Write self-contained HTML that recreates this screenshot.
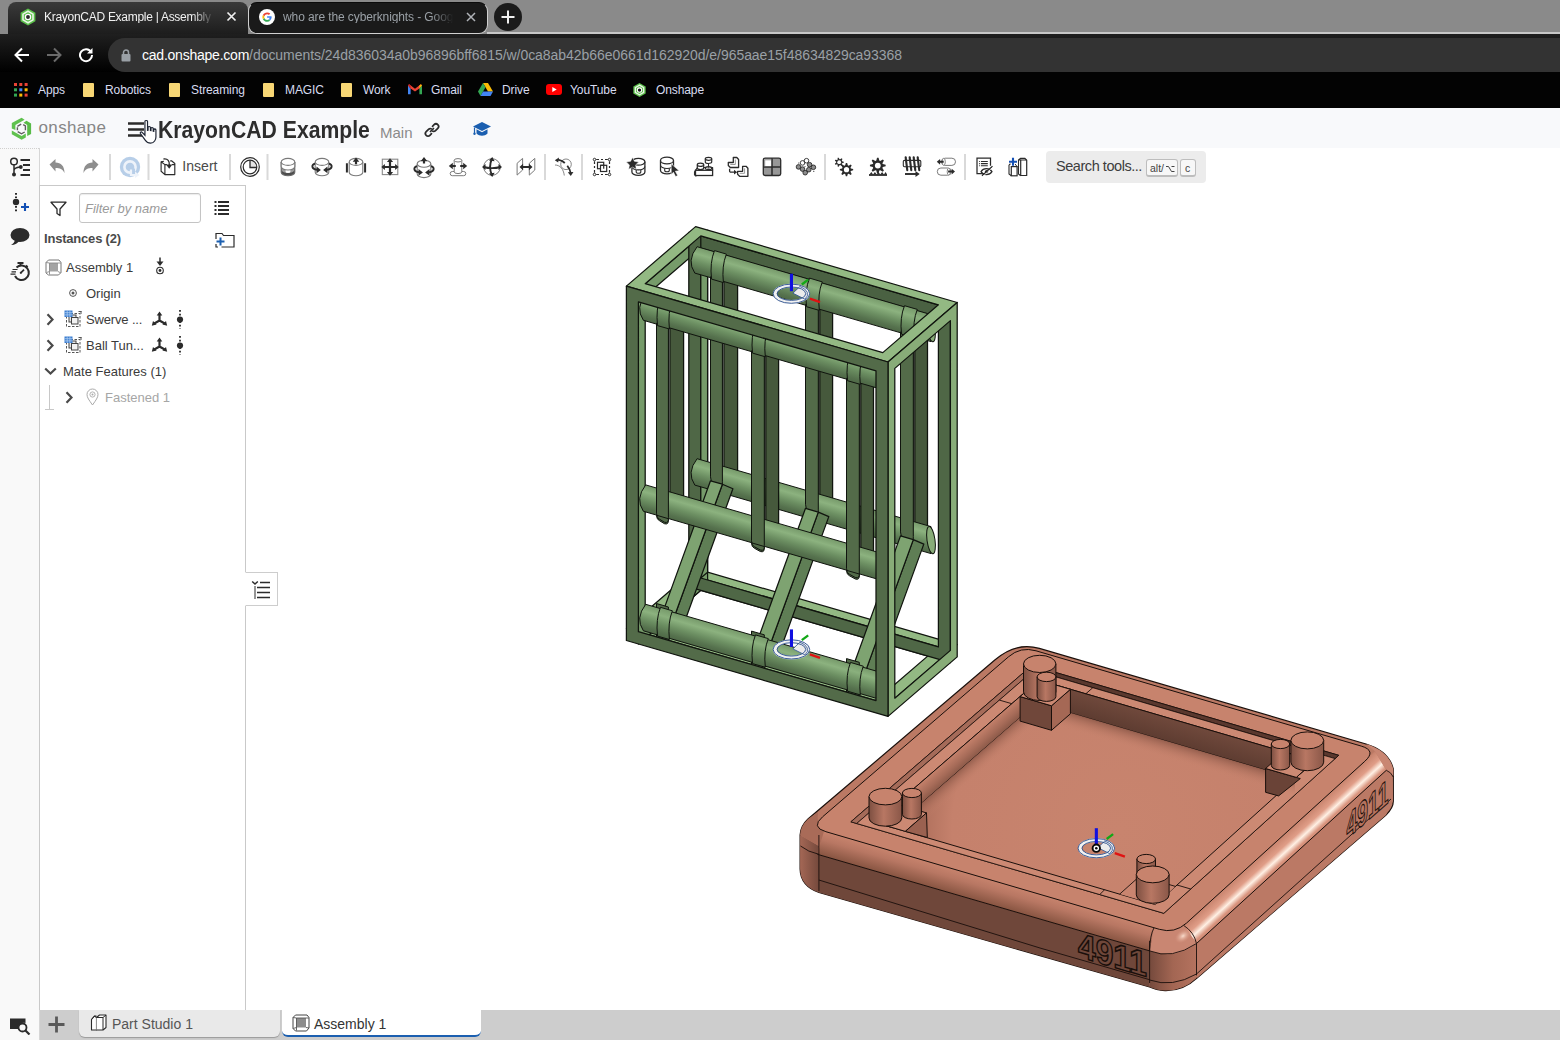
<!DOCTYPE html>
<html>
<head>
<meta charset="utf-8">
<title>KrayonCAD Example | Assembly 1</title>
<style>
*{box-sizing:border-box;margin:0;padding:0}
html,body{width:1560px;height:1040px;overflow:hidden;background:#fff}
body{font-family:"Liberation Sans",sans-serif;position:relative;color:#333}
.abs{position:absolute}
.t{position:absolute;white-space:nowrap;line-height:1}
/* browser chrome */
#tabstrip{left:0;top:0;width:1560px;height:34px;background:#8a8a8a}
#tabline{left:487px;top:32px;width:1073px;height:2px;background:#c8c8c8}
#tab1{left:8px;top:2px;width:240px;height:33px;border-radius:8px 8px 0 0;background:linear-gradient(#3a3a3a,#1c1c1c)}
#tab2{left:248px;top:2px;width:240px;height:32px;border-radius:9px;background:#1a1a1a;border:1px solid #d0d0d0;border-top-color:#0b0b0b}
#navbar{left:0;top:34px;width:1560px;height:38px;background:linear-gradient(#1f1f1f,#000)}
#url{left:108px;top:38px;width:1460px;height:34px;border-radius:17px 0 0 17px;background:#333}
#bm{left:0;top:72px;width:1560px;height:36px;background:#030303}
.bmt{font-size:12px;letter-spacing:-0.1px;color:#d8dcf0;top:84px}
.fold{position:absolute;top:83px;width:11px;height:14px;background:#f8d775;border-radius:1px}
/* onshape */
#hdr{left:0;top:108px;width:1560px;height:40px;background:#f8f9fb}
#tb{left:40px;top:148px;width:1520px;height:38px;background:#fff}
#strip{left:0;top:148px;width:40px;height:892px;background:#f9f9f9;border-right:1px solid #d6d6d6}
#striptop{left:0;top:148px;width:39px;height:1px;border-top:1px dotted #d0d0d0}
#panel{left:39px;top:185px;width:207px;height:825px;background:#fff;border:1px solid #c9c9c9;border-bottom:none}
#bot{left:40px;top:1010px;width:1520px;height:30px;background:#cdcdcd}
.sep{position:absolute;top:154px;width:2px;height:25px;background:#d6d6d6}
.pt{font-size:13px;color:#3b3b3b}
</style>
</head>
<body>
<!-- ===== browser chrome ===== -->
<div id="tabstrip" class="abs"></div>
<div id="tabline" class="abs"></div>
<div id="tab2" class="abs"></div>
<div id="tab1" class="abs"></div>
<div id="navbar" class="abs"></div>
<div id="url" class="abs"></div>
<div id="bm" class="abs"></div>

<!-- tab 1 -->
<svg class="abs" style="left:19px;top:8px" width="18" height="18" viewBox="0 0 18 18"><polygon points="9,0.5 16.4,4.7 16.4,13.3 9,17.5 1.6,13.3 1.6,4.7" fill="#5bbf4a"/><polygon points="9,3.2 14,6.1 14,11.9 9,14.8 4,11.9 4,6.1" fill="none" stroke="#e9f5e6" stroke-width="1.6"/><circle cx="9" cy="9" r="2.6" fill="#2a2a2a" stroke="#fff" stroke-width="1.3"/></svg>
<div class="t" style="left:44px;top:11px;font-size:12px;color:#f1f1f1;width:172px;overflow:hidden;letter-spacing:-0.28px;-webkit-mask-image:linear-gradient(90deg,#000 86%,transparent 99%)">KrayonCAD Example | Assembly 1</div>
<svg class="abs" style="left:226px;top:11px" width="11" height="11" viewBox="0 0 11 11"><path d="M1.5 1.5L9.5 9.5M9.5 1.5L1.5 9.5" stroke="#f0f0f0" stroke-width="1.7"/></svg>
<!-- tab 2 -->
<svg class="abs" style="left:259px;top:9px" width="16" height="16" viewBox="0 0 16 16"><circle cx="8" cy="8" r="8" fill="#fff"/><path d="M12.6 8.1c0-.35-.03-.6-.09-.87H8.1v1.6h2.6c-.05.4-.34 1-.97 1.42l1.5 1.15c.9-.83 1.4-2.04 1.4-3.3z" fill="#4285f4"/><path d="M8.1 12.8c1.27 0 2.34-.42 3.12-1.14l-1.5-1.15c-.4.28-.93.47-1.62.47-1.24 0-2.3-.82-2.67-1.95l-1.53 1.18C4.66 11.73 6.25 12.8 8.1 12.8z" fill="#34a853"/><path d="M5.43 9.03A2.9 2.9 0 015.27 8.1c0-.32.06-.64.15-.93L3.87 5.97A4.7 4.7 0 003.4 8.1c0 .76.18 1.48.5 2.11l1.53-1.18z" fill="#fbbc05"/><path d="M8.1 5.22c.88 0 1.48.38 1.82.7l1.33-1.3C10.43 3.86 9.37 3.4 8.1 3.4c-1.85 0-3.44 1.06-4.22 2.6l1.54 1.2c.38-1.14 1.44-1.97 2.68-1.97z" fill="#ea4335"/></svg>
<div class="t" style="left:283px;top:11px;font-size:12px;color:#9aa0a6;width:172px;overflow:hidden;letter-spacing:-0.1px;-webkit-mask-image:linear-gradient(90deg,#000 86%,transparent 99%)">who are the cyberknights - Google Search</div>
<svg class="abs" style="left:466px;top:12px" width="10" height="10" viewBox="0 0 10 10"><path d="M1 1L9 9M9 1L1 9" stroke="#b0b3b8" stroke-width="1.5"/></svg>
<!-- new tab -->
<div class="abs" style="left:494px;top:3px;width:28px;height:28px;border-radius:14px;background:#1b1b1b"></div>
<svg class="abs" style="left:501px;top:10px" width="14" height="14" viewBox="0 0 14 14"><path d="M7 0.5V13.5M0.5 7H13.5" stroke="#f0f0f0" stroke-width="2"/></svg>
<!-- nav -->
<svg class="abs" style="left:14px;top:47px" width="16" height="16" viewBox="0 0 16 16"><path d="M15 8H2M8 1.5L1.5 8L8 14.5" fill="none" stroke="#fff" stroke-width="2"/></svg>
<svg class="abs" style="left:46px;top:47px" width="16" height="16" viewBox="0 0 16 16"><path d="M1 8H14M8 1.5L14.5 8L8 14.5" fill="none" stroke="#6b6b6b" stroke-width="2"/></svg>
<svg class="abs" style="left:78px;top:47px" width="16" height="16" viewBox="0 0 16 16"><path d="M13.2 5.2A6 6 0 1 0 14 8" fill="none" stroke="#fff" stroke-width="2"/><path d="M14.5 1v5.5H9z" fill="#fff"/></svg>
<svg class="abs" style="left:121px;top:49px" width="10" height="13" viewBox="0 0 10 13"><rect x="0.5" y="5" width="9" height="7.5" rx="1" fill="#9aa0a6"/><path d="M2.5 5.5V3.5a2.5 2.5 0 015 0v2" fill="none" stroke="#9aa0a6" stroke-width="1.5"/></svg>
<div class="t" id="urlt" style="left:142px;top:48px;font-size:14px;color:#fff;letter-spacing:0px"><span id="dom" style="letter-spacing:-0.23px">cad.onshape.com</span><span style="color:#9aa0a6;letter-spacing:-0.043px" id="pth">/documents/24d836034a0b96896bff6815/w/0ca8ab42b66e0661d162920d/e/965aae15f48634829ca93368</span></div>
<!-- bookmarks -->
<svg class="abs" style="left:14px;top:83px" width="14" height="14" viewBox="0 0 14 14"><g><rect x="0" y="0" width="3" height="3" fill="#ea4335"/><rect x="5.3" y="0" width="3" height="3" fill="#ea4335"/><rect x="10.6" y="0" width="3" height="3" fill="#ea4335"/><rect x="0" y="5.3" width="3" height="3" fill="#34a853"/><rect x="5.3" y="5.3" width="3" height="3" fill="#4285f4"/><rect x="10.6" y="5.3" width="3" height="3" fill="#fbbc05"/><rect x="0" y="10.6" width="3" height="3" fill="#34a853"/><rect x="5.3" y="10.6" width="3" height="3" fill="#fbbc05"/><rect x="10.6" y="10.6" width="3" height="3" fill="#ea4335"/></g></svg>
<div class="t bmt" style="left:38px">Apps</div>
<div class="fold" style="left:83px"></div><div class="t bmt" style="left:105px">Robotics</div>
<div class="fold" style="left:169px"></div><div class="t bmt" style="left:191px">Streaming</div>
<div class="fold" style="left:263px"></div><div class="t bmt" style="left:285px">MAGIC</div>
<div class="fold" style="left:341px"></div><div class="t bmt" style="left:363px">Work</div>
<svg class="abs" style="left:408px;top:84px" width="14" height="11" viewBox="0 0 14 11"><path d="M0 1.2V10.2H2.6V4.4L0 1.2z" fill="#4285f4"/><path d="M14 1.2V10.2H11.4V4.4L14 1.2z" fill="#34a853"/><path d="M0 1.2L2.6 4.4 7 7.6 11.4 4.4 14 1.2 12.8 0.3 7 4.7 1.2 0.3z" fill="#ea4335"/><path d="M0 1.2L2.6 4.4V1.6L1.2 0.3z" fill="#c5221f"/><path d="M14 1.2L11.4 4.4V1.6L12.8 0.3z" fill="#fbbc05"/></svg>
<div class="t bmt" style="left:431px">Gmail</div>
<svg class="abs" style="left:478px;top:83px" width="15" height="13" viewBox="0 0 15 13"><path d="M5 0H10L15 8.6H10z" fill="#fbbc05"/><path d="M5 0L0 8.6 2.5 13 7.5 4.3z" fill="#34a853"/><path d="M5 8.6L2.5 13H12.5L15 8.6z" fill="#4285f4"/></svg>
<div class="t bmt" style="left:502px">Drive</div>
<svg class="abs" style="left:546px;top:84px" width="16" height="11" viewBox="0 0 16 11"><rect width="16" height="11" rx="3" fill="#ff0000"/><path d="M6.3 3L10.7 5.5 6.3 8z" fill="#fff"/></svg>
<div class="t bmt" style="left:570px">YouTube</div>
<svg class="abs" style="left:632px;top:82px" width="15" height="16" viewBox="0 0 18 18"><polygon points="9,0.5 16.4,4.7 16.4,13.3 9,17.5 1.6,13.3 1.6,4.7" fill="#5bbf4a"/><polygon points="9,3.2 14,6.1 14,11.9 9,14.8 4,11.9 4,6.1" fill="none" stroke="#e9f5e6" stroke-width="1.6"/><circle cx="9" cy="9" r="2.6" fill="#111" stroke="#fff" stroke-width="1.3"/></svg>
<div class="t bmt" style="left:656px">Onshape</div>
<!--CHROME-->
<!-- ===== onshape ===== -->
<div id="hdr" class="abs"></div>
<div id="tb" class="abs"></div>
<div id="strip" class="abs"></div>
<div id="striptop" class="abs"></div>
<div id="panel" class="abs"></div>
<div id="bot" class="abs"></div>

<!-- header -->
<svg class="abs" style="left:0px;top:108px" width="40" height="40" viewBox="0 108 40 40">
<polygon points="11.800,123 21.600,117.700 24.600,119.700 15.400,125 15.400,129.900 11.800,128.500" fill="#5fc14e"/>
<polygon points="23.500,122.700 26.500,120.800 31.100,123.400 31.100,134 27.200,136.100 27.200,125" fill="#58bb47"/>
<polygon points="11.800,130.500 21.600,136 25.800,133.600 25.800,137.400 21.600,139.800 11.800,134.300" fill="#5fc14e"/>
<path d="M17.400 126.300l3.800-2.100M23.200 124.700l2.200 1.300v4.300M24.700 132l-3.200 1.800-3.800-2.200M17.400 130.300v-3" fill="none" stroke="#5e5e5e" stroke-width="1.400"/>
</svg>
<div class="t" id="ons" style="left:38.500px;top:119.200px;font-size:17px;color:#868686;letter-spacing:0.36px;font-weight:400">onshape</div>
<svg class="abs" style="left:128px;top:121px" width="17" height="17" viewBox="0 0 17 17"><path d="M0 2.500H16M0 8.500H16M0 14.500H16" stroke="#2b2b2b" stroke-width="2.600"/></svg>
<svg class="abs" style="left:139px;top:119px" width="20.500" height="28" viewBox="0 0 19 26"><path d="M5.500 2.200c0-1.100 2.400-1.100 2.400 0v8.300l.5-.1v-2.700c0-1 2.200-1 2.200.1v2.900l.5.100v-2.200c0-1 2.100-.9 2.100.1v2.600l.5.100v-1.500c0-1 2-.8 2 .2v6.500c0 1.600-.5 2.800-1.200 3.800-.8 1.200-1.800 2-3.800 2-2.600 0-3.700-1-4.800-2.600L1.300 13.500c-.6-1 .6-2 1.600-1.100l2.600 2.700z" fill="#fff" stroke="#1d2433" stroke-width="1.100"/></svg>
<div class="t" id="ttl" style="left:158px;top:119px;font-size:23px;font-weight:700;color:#2d2d2d;transform:scaleX(0.921);transform-origin:0 0">KrayonCAD Example</div>
<div class="t" id="main" style="left:380px;top:125px;font-size:15px;color:#8a8a8a">Main</div>
<svg class="abs" style="left:423px;top:121px" width="18" height="18" viewBox="0 0 18 18"><g fill="none" stroke="#2b2b2b" stroke-width="1.700" stroke-linecap="round"><path d="M7.500 10.500l3-3"/><path d="M9.500 5.300l1.600-1.600a2.600 2.600 0 013.700 3.700l-2.300 2.300a2.600 2.600 0 01-2.700.6"/><path d="M8.500 12.700l-1.600 1.600a2.600 2.600 0 01-3.700-3.700l2.300-2.300a2.600 2.600 0 012.700-.6"/></g></svg>
<svg class="abs" style="left:472px;top:121px" width="20" height="17" viewBox="0 0 20 17"><path d="M10 1L1 5.500 10 10l9-4.500z" fill="#1b5fb0"/><path d="M4.500 8.300v4.200c1.500 1.600 3.500 2.200 5.500 2.200s4-.6 5.500-2.200V8.300L10 11.200z" fill="#1b5fb0"/><path d="M2.500 6.500V12" stroke="#1b5fb0" stroke-width="1.200"/><circle cx="2.500" cy="12.800" r="1.200" fill="#1b5fb0"/></svg>
<!--HEADER-->
<svg class="abs" style="left:40px;top:147.800px" width="1520" height="38" viewBox="0 0 1520 38">
<rect x="69" y="6" width="2" height="26" fill="#d9d9d9"/>
<rect x="107.5" y="6" width="2" height="26" fill="#d9d9d9"/>
<rect x="189" y="6" width="2" height="26" fill="#d9d9d9"/>
<rect x="226.5" y="6" width="2" height="26" fill="#d9d9d9"/>
<rect x="504" y="6" width="2" height="26" fill="#d9d9d9"/>
<rect x="541" y="6" width="2" height="26" fill="#d9d9d9"/>
<rect x="784" y="6" width="2" height="26" fill="#d9d9d9"/>
<rect x="924" y="6" width="2" height="26" fill="#d9d9d9"/>
<g transform="translate(17,19)"><path d="M-7.500 -2.500L-1.500 -8v3.500c5.500 0 9 3.500 9 10.500-1.800-3.800-4.500-5-9-5V4.500z" fill="#8e8e8e"/></g>
<g transform="translate(51,19)"><g transform="scale(-1,1)"><path d="M-7.500 -2.500L-1.500 -8v3.500c5.500 0 9 3.500 9 10.500-1.800-3.800-4.500-5-9-5V4.500z" fill="#8e8e8e"/></g></g>
<g transform="translate(90,19)"><circle r="10.200" fill="#b7cee8"/><circle r="5.600" fill="none" stroke="#eef3fa" stroke-width="2.600"/><path d="M0.500 1.500h4.500v7.500h-4.500z" fill="#b7cee8"/><path d="M1 2.500v5.500h5.500" fill="none" stroke="#eef3fa" stroke-width="2.200"/><path d="M5 4.500l4.500 3.500-4.500 3z" fill="#eef3fa"/></g>
<g transform="translate(128,19)"><path d="M-6.900 -5.200L-3.100 -2.400V7.600L-6.900 4.200z" fill="#fff" stroke="#2b2b2b" stroke-width="1.150" stroke-linejoin="round"/><path d="M-3.100 -2.400h2M4 -2.400h2.800V7.600H-3.100" fill="none" stroke="#2b2b2b" stroke-width="1.150" stroke-linejoin="round"/><path d="M-6.900 -5.200l2.800-.6M2.200 -6.200h1.300l3.300 2.700v1.100" fill="none" stroke="#2b2b2b" stroke-width="1.150" stroke-linejoin="round"/><path d="M-4.500 -8C0 -8.700 1.600 -5.500 1.300 -2" fill="none" stroke="#2b2b2b" stroke-width="1.300"/><path d="M-2 -2.600h6.400l-3.200 4.400z" fill="#2b2b2b"/></g>
<text x="142.300" y="23.300" font-family="Liberation Sans, sans-serif" font-size="15.200" fill="#4a4a4a" textLength="35.200" lengthAdjust="spacingAndGlyphs">Insert</text>
<g transform="translate(210,19)"><circle r="9.300" fill="#fff" stroke="#2b2b2b" stroke-width="1.200"/><path d="M0 -6.800A6.800 6.800 0 0 1 6.800 0H0z" fill="#e4e4e4"/><circle r="6.800" fill="none" stroke="#2b2b2b" stroke-width="1.200"/><path d="M0 -6.800V0.500H6.800" fill="none" stroke="#2b2b2b" stroke-width="1.300"/></g>
<g transform="translate(248,19)"><path d="M-6.800 -0.500v5.800a6.800 3.500 0 0013.600 0v-5.800a6.800 3.500 0 01-13.600 0z" fill="#4d4d4d"/><path d="M-6.800 -0.500a6.800 3.500 0 0013.600 0v3a6.800 3.500 0 01-13.600 0z" fill="#9c9c9c"/><path d="M-2.400 2.500v2a2.400 1.600 0 004.800 0v-2z" fill="#fff"/><path d="M-6.800 -5.100v10.400a6.800 3.500 0 0013.600 0v-10.400" fill="none" stroke="#6a6a6a" stroke-width="1.100"/><path d="M-6.800 -5.100v4.600a6.800 3.500 0 0013.600 0v-4.600" fill="#fff" stroke="#7a7a7a" stroke-width="1.100"/><ellipse cx="0" cy="-5.100" rx="6.800" ry="3.500" fill="#fff" stroke="#7a7a7a" stroke-width="1.100"/></g>
<g transform="translate(282,19)"><path d="M-6.800 -5.100v10.400a6.800 3.500 0 0013.600 0v-10.400" fill="#fff" stroke="#7a7a7a" stroke-width="1.100"/><ellipse cx="0" cy="-5.100" rx="6.800" ry="3.500" fill="#fff" stroke="#7a7a7a" stroke-width="1.100"/><path d="M-7 -3.200C-10.800 -2.500 -10.800 2 -5 2.800M7 -3.200C10.800 -2.500 10.800 2 5 2.800" fill="none" stroke="#2b2b2b" stroke-width="1.900"/><path d="M-5.500 -0.400L-1.100 2.900-5.500 6.200zM5.500 -0.400L1.100 2.900 5.500 6.200z" fill="#2b2b2b"/></g>
<g transform="translate(316,19)"><path d="M-6.800 -5.100v10.400a6.800 3.500 0 0013.600 0v-10.400" fill="#fff" stroke="#7a7a7a" stroke-width="1.100"/><ellipse cx="0" cy="-5.100" rx="6.800" ry="3.500" fill="#fff" stroke="#7a7a7a" stroke-width="1.100"/><path d="M-9.100 -3.800v9.400M9.100 -3.800v9.400" stroke="#2b2b2b" stroke-width="2"/><path d="M0 -9.400l3.300 4.200h-2.200v2.400h-2.200v-2.400h-2.200z" fill="#2b2b2b"/></g>
<g transform="translate(350,19)"><rect x="-7.700" y="-7.800" width="15.500" height="15.400" fill="#fdfdfd" stroke="#8a8a8a" stroke-width="1.100"/><path d="M0 -8.700l3.100 3.600h-2v4h4v-2l3.600 3.100-3.600 3.100v-2h-4v4h2l-3.100 3.600-3.100-3.600h2v-4h-4v2l-3.600-3.100 3.600-3.100v2h4v-4h-2z" fill="#2b2b2b"/></g>
<g transform="translate(384,19)"><g transform="translate(0,1.800)"><path d="M-6.800 -5.100v10.400a6.800 3.500 0 0013.600 0v-10.400" fill="#fff" stroke="#7a7a7a" stroke-width="1.100"/><ellipse cx="0" cy="-5.100" rx="6.800" ry="3.500" fill="#fff" stroke="#7a7a7a" stroke-width="1.100"/></g><path d="M0 -10l3.300 4.200h-2.200v2.400h-2.200v-2.400h-2.200z" fill="#2b2b2b"/><g transform="translate(0,2.500)"><path d="M-7 -3.200C-10.800 -2.500 -10.800 2 -5 2.800M7 -3.200C10.800 -2.500 10.800 2 5 2.800" fill="none" stroke="#2b2b2b" stroke-width="1.900"/><path d="M-5.500 -0.400L-1.100 2.900-5.500 6.200zM5.500 -0.400L1.100 2.900 5.500 6.200z" fill="#2b2b2b"/></g></g>
<g transform="translate(418,19)"><rect x="-7.800" y="4.500" width="15.600" height="4.200" rx="2.100" fill="#fff" stroke="#7a7a7a" stroke-width="1"/><path d="M-3.800 -6.700v11.500a3.800 1.800 0 007.600 0v-11.500" fill="#fff" stroke="#7a7a7a" stroke-width="1"/><ellipse cx="0" cy="-6.700" rx="3.800" ry="1.700" fill="#fff" stroke="#7a7a7a" stroke-width="1"/><path d="M-9.200 -1l4-3.300v2.200h3v2.200h-3v2.200zM9.200 -1l-4-3.300v2.200h-3v2.200h3v2.200z" fill="#2b2b2b"/></g>
<g transform="translate(452,19)"><circle r="8.300" fill="#fff" stroke="#7a7a7a" stroke-width="1"/><path d="M0 -8.500C-2.500 -3 -2.500 3 0 8.500M-8.500 0C-3 1.500 3 1.500 8.500 0" fill="none" stroke="#2b2b2b" stroke-width="1.900"/><path d="M-3 -6.500L0.300 -10 2.600 -5.800zM-3 6.500L0.300 10 2.600 5.800zM-6.500 -3L-10 0-6.500 3zM6.500 -3L10 0 6.500 3z" fill="#2b2b2b"/></g>
<g transform="translate(486,19)"><path d="M-8.900 -3.700l5.500-4.900v11.600l-5.500 5.100zM3.300 -3.700l5.500-4.900v11.600l-5.500 5.100z" fill="#fff" stroke="#7a7a7a" stroke-width="1"/><path d="M-6.500 0l3.600-3.200v2.100h5.800v-2.100l3.600 3.200-3.600 3.200v-2.100h-5.800v2.100z" fill="#2b2b2b"/></g>
<g transform="translate(524,19)"><circle cx="2" cy="-2.700" r="5.300" fill="none" stroke="#7a7a7a" stroke-width=".9"/><path d="M-9 -2c5 0 8.500 4 9.300 10.500" fill="none" stroke="#7a7a7a" stroke-width=".9"/><path d="M-6 -7.300C-3 -6.500 -0.500 -5.300 0.800 -4" fill="none" stroke="#2b2b2b" stroke-width="1.800"/><path d="M-9.200 -6.800l4.200-2.700-.8 5z" fill="#2b2b2b"/><path d="M3.300 -1.300C5.500 1.500 6.500 4 6.800 6.500" fill="none" stroke="#2b2b2b" stroke-width="1.800"/><path d="M3.800 5.300l5.600-.3-2.600 4z" fill="#2b2b2b"/></g>
<g transform="translate(562,19)"><path d="M-5.800 -7.5h2.800M-1 -7.5h2M3 -7.5h2.800 M-7.5 -5.800v2.800M-7.5 -1v2M-7.5 3v2.800 M-5.800 7.5h2.800M-1 7.5h2M3 7.5h2.800 M7.5 -5.800v2.800M7.5 -1v2M7.5 3v2.800 " stroke="#2b2b2b" stroke-width="1.200" fill="none"/><circle cx="-7.5" cy="-7.5" r="1.250" fill="#fff" stroke="#2b2b2b" stroke-width="1"/><circle cx="-7.5" cy="7.5" r="1.250" fill="#fff" stroke="#2b2b2b" stroke-width="1"/><circle cx="7.5" cy="-7.5" r="1.250" fill="#fff" stroke="#2b2b2b" stroke-width="1"/><circle cx="7.5" cy="7.5" r="1.250" fill="#fff" stroke="#2b2b2b" stroke-width="1"/><rect x="-4.500" y="-4.700" width="6.200" height="6.400" fill="#fff" stroke="#2b2b2b" stroke-width="1.200"/><rect x="-1.500" y="-1.700" width="6.200" height="6.200" fill="#fff" stroke="#2b2b2b" stroke-width="1.200"/><path d="M-1.500 -1.700h3.200v3.400" fill="none" stroke="#2b2b2b" stroke-width="1.200"/></g>
<g transform="translate(596,19)"><path d="M-4.100 -5.200v10.200a6.500 3.400 0 0013 0v-10.200" fill="#fff" stroke="#2b2b2b" stroke-width="1.300"/><ellipse cx="2.400" cy="-5.200" rx="6.500" ry="3.400" fill="#fff" stroke="#2b2b2b" stroke-width="1.300"/><path d="M-4.100 -0.500a6.500 3.400 0 0013 0" fill="none" stroke="#2b2b2b" stroke-width="1.100"/><path d="M0.200 2.800v2.200a2.300 1.300 0 004.600 0v-2.200" fill="none" stroke="#2b2b2b" stroke-width="1.100"/><path d="M-3.500 -9.600l1.900 3.900 4.300.6-3.100 3 .7 4.300-3.800-2-3.800 2 .7-4.300-3.100-3 4.300-.6z" fill="#2b2b2b" stroke="#fff" stroke-width=".5"/></g>
<g transform="translate(630,19)"><path d="M-9.500 -6.500v10a6.500 3.300 0 0013 0v-10" fill="#fff" stroke="#2b2b2b" stroke-width="1.300"/><ellipse cx="-3" cy="-6.500" rx="6.500" ry="3.300" fill="#fff" stroke="#2b2b2b" stroke-width="1.300"/><path d="M-9.500 -1.800a6.500 3.300 0 0013 0" fill="none" stroke="#2b2b2b" stroke-width="1.100"/><path d="M-5.300 1.500v2a2.300 1.300 0 004.600 0v-2" fill="none" stroke="#2b2b2b" stroke-width="1.100"/><path d="M1.200 -3.200L9.200 3.800 5.400 4.200 7.700 8.600 5.600 9.600 3.400 5.200 1.200 7.600z" fill="#2b2b2b" stroke="#fff" stroke-width=".6"/></g>
<g transform="translate(664,19)"><path d="M-8.500 3.300l2-2.800h15.100v2.800" fill="#fff" stroke="#2b2b2b" stroke-width="1.200" stroke-linejoin="round"/><rect x="-8.500" y="3.300" width="17.100" height="5.200" fill="#fff" stroke="#2b2b2b" stroke-width="1.300"/><path d="M-8.500 3.300l-1 1.500v3l1.800 1.500" fill="none" stroke="#2b2b2b" stroke-width="1.100"/><path d="M-6.700 -2.200v3.200a3.200 1.600 0 006.400 0v-3.200" fill="#fff" stroke="#2b2b2b" stroke-width="1.200"/><ellipse cx="-3.500" cy="-2.200" rx="3.200" ry="1.600" fill="#fff" stroke="#2b2b2b" stroke-width="1.200"/><ellipse cx="4.500" cy="1.200" rx="3.200" ry="1.500" fill="#fff" stroke="#2b2b2b" stroke-width="1.200"/><ellipse cx="4.500" cy="1" rx="1.300" ry=".6" fill="#2b2b2b"/><path d="M4.500 -3.500v4" stroke="#2b2b2b" stroke-width="1.100"/><path d="M1.300 -8.200v3.200a3.200 1.500 0 006.400 0v-3.200" fill="#fff" stroke="#2b2b2b" stroke-width="1.200"/><ellipse cx="4.500" cy="-8.200" rx="3.200" ry="1.500" fill="#fff" stroke="#2b2b2b" stroke-width="1.200"/></g>
<g transform="translate(695.800,19)"><path d="M-7.500 -4.500h5v-5h3.500l1.800 2v8h-8.300l-2-2z" fill="#fff" stroke="#2b2b2b" stroke-width="1.300" stroke-linejoin="round"/><path d="M-5.500 -2.500h5v-5" fill="none" stroke="#9a9a9a" stroke-width="1"/><g transform="translate(9.300,8.800)"><path d="M-7.500 -4.500h5v-5h3.500l1.800 2v8h-8.300l-2-2z" fill="#fff" stroke="#2b2b2b" stroke-width="1.300" stroke-linejoin="round"/><path d="M-5.500 -2.500h5v-5" fill="none" stroke="#9a9a9a" stroke-width="1"/></g><path d="M-6.200 1.800v2.200a1.200 1.200 0 001.200 1.200h4" fill="none" stroke="#2b2b2b" stroke-width="1.300"/><path d="M-1.800 2.800l3.200 2.400-3.200 2.400z" fill="#2b2b2b"/></g>
<g transform="translate(732,19)"><rect x="-8.700" y="-8.800" width="17.400" height="17.300" rx="1.800" fill="#979797" stroke="#2b2b2b" stroke-width="1.300"/><rect x="-7.600" y="-7.700" width="7.600" height="7.700" fill="#fff"/><path d="M0 -8.800v17.300M-8.700 0h17.400" stroke="#2b2b2b" stroke-width="1.500"/><path d="M-7.300 -7.200h6.500M-7.300 -7.200v6.300" stroke="#777" stroke-width=".8" fill="none"/></g>
<g transform="translate(766,19)"><path d="M-3.5 -4.1L0.5 -6.3" stroke="#2b2b2b" stroke-width="2.600" stroke-linecap="round"/><circle cx="-3.5" cy="-4.1" r="2.300" fill="#fff" stroke="#2b2b2b" stroke-width=".9"/><circle cx="0.5" cy="-6.3" r="2.300" fill="#fff" stroke="#2b2b2b" stroke-width=".9"/><path d="M-7.5 -0.1L-3.5 2.1" stroke="#2b2b2b" stroke-width="2.600" stroke-linecap="round"/><circle cx="-7.5" cy="-0.1" r="2.300" fill="#8d8d8d" stroke="#2b2b2b" stroke-width=".9"/><circle cx="-3.5" cy="2.1" r="2.300" fill="#8d8d8d" stroke="#2b2b2b" stroke-width=".9"/><path d="M3.6 -2.3L7.4 0.3" stroke="#2b2b2b" stroke-width="2.600" stroke-linecap="round"/><circle cx="3.6" cy="-2.3" r="2.300" fill="#8d8d8d" stroke="#2b2b2b" stroke-width=".9"/><circle cx="7.4" cy="0.3" r="2.300" fill="#8d8d8d" stroke="#2b2b2b" stroke-width=".9"/><path d="M-0.8 5.7L2.8 2.7" stroke="#2b2b2b" stroke-width="2.600" stroke-linecap="round"/><circle cx="-0.8" cy="5.7" r="2.300" fill="#8d8d8d" stroke="#2b2b2b" stroke-width=".9"/><circle cx="2.8" cy="2.7" r="2.300" fill="#8d8d8d" stroke="#2b2b2b" stroke-width=".9"/><g fill="#2b2b2b"><circle cx="-7.300" cy="-4" r=".6"/><circle cx="7.800" cy="4.300" r=".6"/><circle cx="-1" cy="-0.500" r=".5"/></g></g>
<g transform="translate(804,19)"><polygon points="-0.23,-5.32 -0.23,-4.28 -1.93,-3.80 -2.23,-3.18 -1.55,-1.55 -2.35,-0.91 -3.80,-1.93 -4.46,-1.78 -5.32,-0.23 -6.32,-0.46 -6.42,-2.23 -6.95,-2.65 -8.69,-2.35 -9.14,-3.28 -7.82,-4.46 -7.82,-5.14 -9.14,-6.32 -8.69,-7.25 -6.95,-6.95 -6.42,-7.37 -6.32,-9.14 -5.32,-9.37 -4.46,-7.82 -3.80,-7.67 -2.35,-8.69 -1.55,-8.05 -2.23,-6.42 -1.93,-5.80" fill="#2b2b2b"/><circle cx="-4.8" cy="-4.8" r="1.90" fill="#fff"/><polygon points="9.17,2.04 9.17,3.36 6.86,4.02 6.52,4.85 7.68,6.95 6.75,7.88 4.65,6.72 3.82,7.06 3.16,9.37 1.84,9.37 1.18,7.06 0.35,6.72 -1.75,7.88 -2.68,6.95 -1.52,4.85 -1.86,4.02 -4.17,3.36 -4.17,2.04 -1.86,1.38 -1.52,0.55 -2.68,-1.55 -1.75,-2.48 0.35,-1.32 1.18,-1.66 1.84,-3.97 3.16,-3.97 3.82,-1.66 4.65,-1.32 6.75,-2.48 7.68,-1.55 6.52,0.55 6.86,1.38" fill="#2b2b2b"/><circle cx="2.5" cy="2.7" r="2.60" fill="#fff"/></g>
<g transform="translate(838,19)"><polygon points="7.66,-2.17 7.66,-0.63 4.79,0.11 4.40,1.06 5.91,3.61 4.81,4.71 2.26,3.20 1.31,3.59 0.57,6.46 -0.97,6.46 -1.71,3.59 -2.66,3.20 -5.21,4.71 -6.31,3.61 -4.80,1.06 -5.19,0.11 -8.06,-0.63 -8.06,-2.17 -5.19,-2.91 -4.80,-3.86 -6.31,-6.41 -5.21,-7.51 -2.66,-6.00 -1.71,-6.39 -0.97,-9.26 0.57,-9.26 1.31,-6.39 2.26,-6.00 4.81,-7.51 5.91,-6.41 4.40,-3.86 4.79,-2.91" fill="#2b2b2b"/><circle cx="-0.2" cy="-1.4" r="2.90" fill="#fff"/><path d="M-9 8h18" stroke="#2b2b2b" stroke-width="1.800"/><path d="M-8.500 7.500l1.800-2.600 1.800 2.600 1.800-2.600 1.800 2.600 1.800-2.600 1.800 2.600 1.800-2.600 1.800 2.600 1.800-2.600 1.300 2.600z" fill="#2b2b2b"/></g>
<g transform="translate(872,19)"><rect x="-8.700" y="-6.600" width="17.500" height="6.300" rx="1.200" fill="#fff" stroke="#2b2b2b" stroke-width="1.100"/><path d="M-6.3 -9.700l1.600 12.800" stroke="#2b2b2b" stroke-width="2.100" stroke-linecap="round"/><path d="M-2.3 -9.700l1.600 12.800" stroke="#2b2b2b" stroke-width="2.100" stroke-linecap="round"/><path d="M1.7 -9.700l1.600 12.800" stroke="#2b2b2b" stroke-width="2.100" stroke-linecap="round"/><path d="M5.7 -9.700l1.600 12.800" stroke="#2b2b2b" stroke-width="2.100" stroke-linecap="round"/><path d="M-7 7h11" stroke="#2b2b2b" stroke-width="1.900"/><path d="M3.500 4l4.200 3-4.200 3z" fill="#2b2b2b"/></g>
<g transform="translate(906,19)"><rect x="-4.500" y="-8.800" width="14" height="7.200" rx="3.600" fill="#fff" stroke="#7a7a7a" stroke-width="1"/><ellipse cx="-2.300" cy="-5.200" rx="1.600" ry="3.500" fill="#fff" stroke="#7a7a7a" stroke-width=".9"/><path d="M-9.200 -5.200l3.300-2.900v1.900h3.600v2h-3.600v1.900z" fill="#2b2b2b"/><rect x="-8.700" y="1" width="14" height="7.200" rx="3.600" fill="#fff" stroke="#7a7a7a" stroke-width="1"/><ellipse cx="2.800" cy="4.600" rx="1.600" ry="3.500" fill="#fff" stroke="#7a7a7a" stroke-width=".9"/><path d="M9 4.600l-3.300-2.900v1.900h-3.600v2h3.600v1.900z" fill="#2b2b2b"/></g>
<g transform="translate(944,19)"><path d="M-0.500 6.500h-6.500v-15.300h13.500v7.500" fill="#fff" stroke="#2b2b2b" stroke-width="1.250"/><path d="M-3 -5.500h6.800M-3 -3.400h6.800M-3 -1.300h6.800" stroke="#2b2b2b" stroke-width="1.100"/><path d="M-4.800 -5.500h.9M-4.800 -3.400h.9M-4.800 -1.300h.9" stroke="#2b2b2b" stroke-width="1.100"/><path d="M-3 4.600c2.300-4 8.500-4 11 0-2.500 4-8.700 4-11 0z" fill="#fff" stroke="#2b2b2b" stroke-width="1.150"/><circle cx="2.600" cy="4.600" r="1.700" fill="#2b2b2b"/><path d="M-2 8.800l10.500-9.500" stroke="#2b2b2b" stroke-width="1.300"/><path d="M-1.300 9.500l10.500-9.500" stroke="#fff" stroke-width=".7"/></g>
<g transform="translate(978,19)"><path d="M-9 -2l1.500-1.200M-9 -2v9l2.300 1.800" fill="none" stroke="#2b2b2b" stroke-width="1.100"/><rect x="-6.700" y="-0.400" width="5.800" height="9.200" fill="#fff" stroke="#2b2b2b" stroke-width="1.200"/><path d="M-0.900 -0.400l-2-2.600" stroke="#2b2b2b" stroke-width="1"/><path d="M0.500 -7l2.200-1.700h4l2 1.900v15.300h-6v-15.500z" fill="#fff" stroke="#2b2b2b" stroke-width="1.200" stroke-linejoin="round"/><path d="M0.500 -7v14l2.200 1.800M2.700 -7h6" fill="none" stroke="#2b2b2b" stroke-width="1.100"/><path d="M-5 -9.200v8M-9 -5.200h8" stroke="#1450b4" stroke-width="2.100"/></g>
</svg>
<div class="abs" style="left:1046px;top:151px;width:160px;height:32px;border-radius:4px;background:#ececec"></div>
<div class="t" id="srch" style="left:1056px;top:159px;font-size:14.500px;color:#3d3d3d;letter-spacing:-0.45px">Search tools...</div>
<div class="abs" style="left:1146px;top:159px;width:32px;height:18px;border:1px solid #bdbdbd;border-bottom-width:2px;border-radius:3px;background:#f7f7f7"></div><div class="t" style="left:1150px;top:163px;font-size:10.500px;color:#444">alt/</div><svg class="abs" style="left:1166px;top:165px" width="9" height="8" viewBox="0 0 9 8"><path d="M0 1.500h2.500l3 5h3M5.500 1.500h3" fill="none" stroke="#444" stroke-width="1"/></svg>
<div class="abs" style="left:1180px;top:159px;width:16px;height:18px;border:1px solid #bdbdbd;border-bottom-width:2px;border-radius:3px;background:#f7f7f7"></div><div class="t" style="left:1185px;top:163px;font-size:10.500px;color:#444">c</div>
<!--TOOLBAR-->

<!-- left strip icons -->
<svg class="abs" style="left:8px;top:155px" width="24" height="24" viewBox="0 0 24 24"><g fill="none" stroke="#2b2b2b" stroke-width="1.500"><circle cx="6" cy="6.500" r="3.300"/><path d="M6 10v8M6 15.500c0-2.500 2-3 6-3.500"/><path d="M12.500 5h9.500M15 10h7M15 15h7M12.500 20h9.500" stroke-width="1.800"/></g><circle cx="6" cy="19.500" r="2" fill="#2b2b2b"/><circle cx="12.800" cy="12" r="1.900" fill="#2b2b2b"/></svg>
<svg class="abs" style="left:9px;top:191px" width="24" height="24" viewBox="0 0 24 24"><path d="M7 2v5M7 15v5.200" stroke="#2b2b2b" stroke-width="2" stroke-dasharray="1.800 1.600"/><circle cx="7" cy="11" r="3.200" fill="#2b2b2b"/><path d="M16 12v8M12 16h8" stroke="#1450b4" stroke-width="2.100"/></svg>
<svg class="abs" style="left:9px;top:226px" width="22" height="22" viewBox="0 0 22 22"><ellipse cx="11" cy="9" rx="9.500" ry="7" fill="#2b2b2b"/><path d="M6 13c0 3-2 5-4 6 4 0 7-2 8.500-4.500z" fill="#2b2b2b"/></svg>
<svg class="abs" style="left:9px;top:260px" width="23" height="24" viewBox="0 0 23 24"><path d="M7.500 7.500a7.300 7.300 0 1 1 -1.500 8.500" fill="none" stroke="#2b2b2b" stroke-width="2"/><path d="M8.500 3h6M11.500 3v3M17 5.500l1.600 1.600" stroke="#2b2b2b" stroke-width="1.900"/><path d="M11.800 12.800l3.200-3.200" stroke="#2b2b2b" stroke-width="1.700"/><circle cx="11.800" cy="12.800" r="1.100" fill="#2b2b2b"/><path d="M3.500 9.500h5M2.500 11.800h4.500M1.500 14.200h5" stroke="#2b2b2b" stroke-width="1.200"/></svg>
<svg class="abs" style="left:9px;top:1017px" width="22" height="18" viewBox="0 0 22 18"><path d="M1 1.500h15.500v4.500a6 6 0 00-7.500 6h-8z" fill="#2b2b2b"/><circle cx="13.500" cy="10.500" r="4" fill="#f7f7f7" stroke="#2b2b2b" stroke-width="1.800"/><path d="M16.500 13.500l4 4" stroke="#2b2b2b" stroke-width="2.200"/></svg>
<!-- panel -->
<svg class="abs" style="left:50px;top:201px" width="17" height="17" viewBox="0 0 17 17"><path d="M1 1.200h15l-6 6.800v6.500l-3-2v-4.500z" fill="none" stroke="#2b2b2b" stroke-width="1.300" stroke-linejoin="round"/></svg>
<div class="abs" style="left:79px;top:193px;width:122px;height:30px;border:1px solid #c4c4c4;border-radius:3px;background:#fff;box-shadow:inset 0 1px 1px rgba(0,0,0,.08)"></div>
<div class="t" id="flt" style="left:85px;top:202px;font-size:13px;font-style:italic;color:#9a9a9a">Filter by name</div>
<svg class="abs" style="left:214px;top:200px" width="16" height="16" viewBox="0 0 16 16"><path d="M4 2h11M4 6h11M4 10h11M4 14h11" stroke="#2b2b2b" stroke-width="1.800"/><path d="M0.500 2h2M0.500 6h2M0.500 10h2M0.500 14h2" stroke="#2b2b2b" stroke-width="1.800"/></svg>
<div class="t pt" id="inst" style="left:44px;top:232px;font-weight:700;color:#4a4a4a;font-size:13px;letter-spacing:-0.2px">Instances (2)</div>
<svg class="abs" style="left:215px;top:232px" width="20" height="17" viewBox="0 0 20 17"><path d="M1 7V1.500h6l1.500 2h10.500v11.500H6.500" fill="none" stroke="#2b2b2b" stroke-width="1.200"/><path d="M1 12v3h2" fill="none" stroke="#2b2b2b" stroke-width="1.200"/><path d="M5.500 5.500v8M1.500 9.500h8" stroke="#1b5fb0" stroke-width="2"/></svg>
<svg class="abs" style="left:45px;top:259px" width="17" height="17" viewBox="0 0 17 17"><path d="M1 3.500l2.500-2.500h10.500l2 2.500v10l-2.500 2.500h-10l-2.500-2z" fill="#fff" stroke="#777" stroke-width="1" stroke-linejoin="round"/><rect x="4.500" y="4" width="8.500" height="8.500" fill="#a3a3a3"/><path d="M1 3.500l3.500.5v11.500M4.500 4h11.500M13 12.500l3 1.500M4.500 12.500l-3 1" fill="none" stroke="#8a8a8a" stroke-width=".9"/></svg>
<div class="t pt" id="asm" style="left:66px;top:261px">Assembly 1</div>
<svg class="abs" style="left:154px;top:257px" width="12" height="20" viewBox="0 0 12 20"><path d="M6 0.500v6" stroke="#2b2b2b" stroke-width="1.500"/><path d="M2.500 4.500h7L6 9z" fill="#2b2b2b"/><circle cx="6" cy="13.500" r="3.300" fill="none" stroke="#2b2b2b" stroke-width="1.100"/><circle cx="6" cy="13.500" r="1.400" fill="#2b2b2b"/></svg>
<svg class="abs" style="left:68px;top:288px" width="10" height="10" viewBox="0 0 10 10"><circle cx="5" cy="5" r="3.400" fill="none" stroke="#555" stroke-width="1"/><circle cx="5" cy="5" r="1.500" fill="#555"/></svg>
<div class="t pt" id="org" style="left:86px;top:287px">Origin</div>
<svg class="abs" style="left:46px;top:313px" width="9" height="13" viewBox="0 0 9 13"><path d="M1.500 1.200l5 5.300-5 5.300" fill="none" stroke="#4a4a4a" stroke-width="2.200"/></svg>
<svg class="abs" style="left:64px;top:310px" width="18" height="18" viewBox="0 0 18 18"><rect x="2.500" y="3.500" width="13.500" height="13" fill="none" stroke="#555" stroke-width="1" stroke-dasharray="2.500 1.500"/><rect x="5" y="5" width="7" height="7" fill="#e8e8e8" stroke="#444" stroke-width="1"/><rect x="7.500" y="7.500" width="6.500" height="6.500" fill="#f2f2f2" stroke="#444" stroke-width="1"/><rect x="0.500" y="0.500" width="8" height="6.500" fill="#3d7ed0"/><path d="M0.500 2.700h8M0.500 4.900h8M3.200 0.500v6.500M5.900 0.500v6.500" stroke="#b9d4f4" stroke-width=".7"/><path d="M14.500 1.500l3 0M17 1v3" stroke="#555" stroke-width="1"/></svg>
<div class="t pt" id="swv" style="left:86px;top:313px;letter-spacing:-0.15px">Swerve ...</div>
<svg class="abs" style="left:151px;top:311px" width="17" height="16" viewBox="0 0 17 16"><path d="M8.500 3v6.500M8.500 9.500l-5.200 3M8.500 9.500l5.200 3" stroke="#2b2b2b" stroke-width="2.200"/><path d="M8.500 0.500l2.800 4h-5.600zM0.800 14.800l1.200-4.800 3.600 3.600zM16.200 14.800l-1.200-4.800-3.600 3.600z" fill="#2b2b2b"/></svg>
<svg class="abs" style="left:175px;top:310px" width="10" height="19" viewBox="0 0 10 19"><path d="M5 0v19" stroke="#2b2b2b" stroke-width="1.800" stroke-dasharray="1.800 1.900"/><circle cx="5" cy="9.500" r="3.100" fill="#2b2b2b"/></svg>
<svg class="abs" style="left:46px;top:339px" width="9" height="13" viewBox="0 0 9 13"><path d="M1.500 1.200l5 5.300-5 5.300" fill="none" stroke="#4a4a4a" stroke-width="2.200"/></svg>
<svg class="abs" style="left:64px;top:336px" width="18" height="18" viewBox="0 0 18 18"><rect x="2.500" y="3.500" width="13.500" height="13" fill="none" stroke="#555" stroke-width="1" stroke-dasharray="2.500 1.500"/><rect x="5" y="5" width="7" height="7" fill="#e8e8e8" stroke="#444" stroke-width="1"/><rect x="7.500" y="7.500" width="6.500" height="6.500" fill="#f2f2f2" stroke="#444" stroke-width="1"/><rect x="0.500" y="0.500" width="8" height="6.500" fill="#3d7ed0"/><path d="M0.500 2.700h8M0.500 4.900h8M3.200 0.500v6.500M5.900 0.500v6.500" stroke="#b9d4f4" stroke-width=".7"/><path d="M14.500 1.500l3 0M17 1v3" stroke="#555" stroke-width="1"/></svg>
<div class="t pt" id="btn" style="left:86px;top:339px">Ball Tun...</div>
<svg class="abs" style="left:151px;top:337px" width="17" height="16" viewBox="0 0 17 16"><path d="M8.500 3v6.500M8.500 9.500l-5.200 3M8.500 9.500l5.200 3" stroke="#2b2b2b" stroke-width="2.200"/><path d="M8.500 0.500l2.800 4h-5.600zM0.800 14.800l1.200-4.800 3.600 3.600zM16.200 14.800l-1.200-4.800-3.600 3.600z" fill="#2b2b2b"/></svg>
<svg class="abs" style="left:175px;top:336px" width="10" height="19" viewBox="0 0 10 19"><path d="M5 0v19" stroke="#2b2b2b" stroke-width="1.800" stroke-dasharray="1.800 1.900"/><circle cx="5" cy="9.500" r="3.100" fill="#2b2b2b"/></svg>
<svg class="abs" style="left:44px;top:367px" width="13" height="9" viewBox="0 0 13 9"><path d="M1.200 1.500l5.300 5 5.300-5" fill="none" stroke="#4a4a4a" stroke-width="2.200"/></svg>
<div class="t pt" id="mf" style="left:63px;top:365px">Mate Features (1)</div>
<div class="abs" style="left:49px;top:385px;width:1px;height:25px;background:#c8c8c8"></div><div class="abs" style="left:45px;top:409px;width:9px;height:1px;background:#c8c8c8"></div>
<svg class="abs" style="left:65px;top:391px" width="9" height="13" viewBox="0 0 9 13"><path d="M1.500 1.200l5 5.300-5 5.300" fill="none" stroke="#4a4a4a" stroke-width="2.200"/></svg>
<svg class="abs" style="left:86px;top:388px" width="13" height="18" viewBox="0 0 13 18"><path d="M6.500 17C3 12 1 9.500 1 6.500a5.500 5.500 0 0111 0c0 3-2 5.500-5.500 10.500z" fill="#fff" stroke="#aaa" stroke-width="1"/><circle cx="6.500" cy="6.500" r="2.600" fill="none" stroke="#aaa" stroke-width=".9"/><circle cx="6.500" cy="6.500" r="1" fill="#aaa"/></svg>
<div class="t pt" id="fst" style="left:105px;top:391px;color:#a6a6a6">Fastened 1</div>
<!-- side handle -->
<div class="abs" style="left:245px;top:572px;width:33px;height:34px;background:#fff;border:1px solid #cdcdcd;border-left-color:#fff"></div>
<svg class="abs" style="left:250px;top:578px" width="24" height="24" viewBox="0 0 24 24"><path d="M2.200 3.500l2.800 2.600 2.800-2.600" fill="none" stroke="#2b2b2b" stroke-width="1.500"/><path d="M10 4.500h10M7 9.500h13M7 14.500h13M7 19.500h13" stroke="#2b2b2b" stroke-width="1.300"/><path d="M5 8v13" stroke="#8a8a8a" stroke-width="1.800"/></svg>
<!--PANEL-->

<svg class="abs" style="left:48px;top:1016px" width="17" height="17" viewBox="0 0 17 17"><path d="M8.500 0.500v16M0.500 8.500h16" stroke="#595959" stroke-width="2.800"/></svg>
<div class="abs" style="left:79px;top:1010px;width:200.500px;height:26.500px;background:#e9e9e9;border-radius:0 0 6px 6px;box-shadow:0 1px 1px rgba(0,0,0,.25)"></div>
<svg class="abs" style="left:90px;top:1014px" width="18" height="18" viewBox="0 0 18 18"><path d="M1.500 5.500v10.500h5v-12.500l-2-1.500z" fill="#fff" stroke="#2b2b2b" stroke-width="1.100" stroke-linejoin="round"/><path d="M1.500 5.500l3-3.500h2" fill="none" stroke="#2b2b2b" stroke-width="1"/><path d="M6.500 3.500l3-2.500h6.500v12.500l-3 2.500h-6.500" fill="#fff" stroke="#2b2b2b" stroke-width="1.100" stroke-linejoin="round"/><path d="M13 3.500v12.500M6.500 3.500h6.500l3-2.500" fill="none" stroke="#2b2b2b" stroke-width="1"/></svg>
<div class="t" id="ps" style="left:112px;top:1017px;font-size:14px;color:#555">Part Studio 1</div>
<div class="abs" style="left:282px;top:1010px;width:199px;height:27px;background:#fff;border-radius:0 0 6px 6px;border-bottom:2px solid #1b5fb0"></div>
<svg class="abs" style="left:292px;top:1014px" width="18" height="18" viewBox="0 0 18 18"><path d="M1 3.500l2.500-2.500h11.500l2 2.500v10.500l-2.500 3h-11l-2.500-2.500z" fill="#fff" stroke="#444" stroke-width="1" stroke-linejoin="round"/><rect x="4.500" y="4" width="9.500" height="9.500" fill="#8c8c8c"/><path d="M1 3.500l3.500.5v12.500M4.500 4h12.500M14 13.500l3 .5M4.500 13.500l-3.500 1" fill="none" stroke="#555" stroke-width=".9"/></svg>
<div class="t" id="as" style="left:314px;top:1017px;font-size:14px;color:#333">Assembly 1</div>
<!--BOTTOM-->
<!--MODEL-START--><svg class="abs" style="left:246px;top:186px" width="1314" height="823" viewBox="246 186 1314 823"><defs><linearGradient id="rg1" gradientUnits="userSpaceOnUse" x1="691.4" y1="245.1" x2="684.2" y2="270.0"><stop offset="0" stop-color="#76996a"/><stop offset="0.27" stop-color="#8cb27f"/><stop offset="0.58" stop-color="#6c8f62"/><stop offset="0.85" stop-color="#56724e"/><stop offset="1" stop-color="#4e6846"/></linearGradient><linearGradient id="rg2" gradientUnits="userSpaceOnUse" x1="691.4" y1="457.1" x2="684.2" y2="482.0"><stop offset="0" stop-color="#76996a"/><stop offset="0.27" stop-color="#8cb27f"/><stop offset="0.58" stop-color="#6c8f62"/><stop offset="0.85" stop-color="#56724e"/><stop offset="1" stop-color="#4e6846"/></linearGradient><linearGradient id="rg3" gradientUnits="userSpaceOnUse" x1="711.5" y1="249.7" x2="703.6" y2="276.8"><stop offset="0" stop-color="#76996a"/><stop offset="0.27" stop-color="#8ab07d"/><stop offset="0.58" stop-color="#6a8d60"/><stop offset="0.85" stop-color="#56724e"/><stop offset="1" stop-color="#4e6846"/></linearGradient><linearGradient id="rg4" gradientUnits="userSpaceOnUse" x1="806.5" y1="277.3" x2="798.6" y2="304.4"><stop offset="0" stop-color="#76996a"/><stop offset="0.27" stop-color="#8ab07d"/><stop offset="0.58" stop-color="#6a8d60"/><stop offset="0.85" stop-color="#56724e"/><stop offset="1" stop-color="#4e6846"/></linearGradient><linearGradient id="rg5" gradientUnits="userSpaceOnUse" x1="901.5" y1="304.8" x2="893.6" y2="331.9"><stop offset="0" stop-color="#76996a"/><stop offset="0.27" stop-color="#8ab07d"/><stop offset="0.58" stop-color="#6a8d60"/><stop offset="0.85" stop-color="#56724e"/><stop offset="1" stop-color="#4e6846"/></linearGradient><linearGradient id="rg6" gradientUnits="userSpaceOnUse" x1="640.0" y1="292.3" x2="632.8" y2="317.2"><stop offset="0" stop-color="#76996a"/><stop offset="0.27" stop-color="#8cb27f"/><stop offset="0.58" stop-color="#6c8f62"/><stop offset="0.85" stop-color="#56724e"/><stop offset="1" stop-color="#4e6846"/></linearGradient><linearGradient id="rg7" gradientUnits="userSpaceOnUse" x1="640.0" y1="483.3" x2="632.8" y2="508.2"><stop offset="0" stop-color="#76996a"/><stop offset="0.27" stop-color="#8cb27f"/><stop offset="0.58" stop-color="#6c8f62"/><stop offset="0.85" stop-color="#56724e"/><stop offset="1" stop-color="#4e6846"/></linearGradient><linearGradient id="rg8" gradientUnits="userSpaceOnUse" x1="640.0" y1="602.6" x2="632.7" y2="627.7"><stop offset="0" stop-color="#76996a"/><stop offset="0.27" stop-color="#8cb27f"/><stop offset="0.58" stop-color="#6c8f62"/><stop offset="0.85" stop-color="#56724e"/><stop offset="1" stop-color="#4e6846"/></linearGradient><linearGradient id="rg9" gradientUnits="userSpaceOnUse" x1="657.5" y1="296.2" x2="649.6" y2="323.3"><stop offset="0" stop-color="#76996a"/><stop offset="0.27" stop-color="#8ab07d"/><stop offset="0.58" stop-color="#6a8d60"/><stop offset="0.85" stop-color="#56724e"/><stop offset="1" stop-color="#4e6846"/></linearGradient><linearGradient id="rg10" gradientUnits="userSpaceOnUse" x1="657.5" y1="606.5" x2="649.6" y2="633.8"><stop offset="0" stop-color="#76996a"/><stop offset="0.27" stop-color="#8ab07d"/><stop offset="0.58" stop-color="#6a8d60"/><stop offset="0.85" stop-color="#56724e"/><stop offset="1" stop-color="#4e6846"/></linearGradient><linearGradient id="rg11" gradientUnits="userSpaceOnUse" x1="752.5" y1="323.7" x2="744.6" y2="350.8"><stop offset="0" stop-color="#76996a"/><stop offset="0.27" stop-color="#8ab07d"/><stop offset="0.58" stop-color="#6a8d60"/><stop offset="0.85" stop-color="#56724e"/><stop offset="1" stop-color="#4e6846"/></linearGradient><linearGradient id="rg12" gradientUnits="userSpaceOnUse" x1="752.5" y1="634.0" x2="744.6" y2="661.3"><stop offset="0" stop-color="#76996a"/><stop offset="0.27" stop-color="#8ab07d"/><stop offset="0.58" stop-color="#6a8d60"/><stop offset="0.85" stop-color="#56724e"/><stop offset="1" stop-color="#4e6846"/></linearGradient><linearGradient id="rg13" gradientUnits="userSpaceOnUse" x1="847.5" y1="351.3" x2="839.6" y2="378.4"><stop offset="0" stop-color="#76996a"/><stop offset="0.27" stop-color="#8ab07d"/><stop offset="0.58" stop-color="#6a8d60"/><stop offset="0.85" stop-color="#56724e"/><stop offset="1" stop-color="#4e6846"/></linearGradient><linearGradient id="rg14" gradientUnits="userSpaceOnUse" x1="847.5" y1="661.6" x2="839.6" y2="688.9"><stop offset="0" stop-color="#76996a"/><stop offset="0.27" stop-color="#8ab07d"/><stop offset="0.58" stop-color="#6a8d60"/><stop offset="0.85" stop-color="#56724e"/><stop offset="1" stop-color="#4e6846"/></linearGradient><linearGradient id="tfl" gradientUnits="userSpaceOnUse" x1="900" y1="853.4" x2="893" y2="877.4"><stop offset="0" stop-color="#c7836d"/><stop offset="0.35" stop-color="#b87763"/><stop offset="1" stop-color="#84523f"/></linearGradient><linearGradient id="tfr" gradientUnits="userSpaceOnUse" x1="1280" y1="837.9" x2="1301" y2="861"><stop offset="0" stop-color="#c7836d"/><stop offset="0.28" stop-color="#e09d87"/><stop offset="0.45" stop-color="#fff0e4"/><stop offset="0.62" stop-color="#d8937d"/><stop offset="1" stop-color="#b5735f"/></linearGradient><linearGradient id="tcor" gradientUnits="userSpaceOnUse" x1="1149" y1="0" x2="1197" y2="0"><stop offset="0" stop-color="#74493c"/><stop offset="0.5" stop-color="#a36653"/><stop offset="1" stop-color="#b5735f"/></linearGradient><linearGradient id="tlc" gradientUnits="userSpaceOnUse" x1="800" y1="0" x2="819" y2="0"><stop offset="0" stop-color="#a46755"/><stop offset="1" stop-color="#74493c"/></linearGradient><linearGradient id="twallL" gradientUnits="userSpaceOnUse" x1="950" y1="757" x2="960.6" y2="769.1"><stop offset="0" stop-color="#c5816b"/><stop offset="0.6" stop-color="#a66b58"/><stop offset="1" stop-color="#8c5a49"/></linearGradient><radialGradient id="tfloor" gradientUnits="userSpaceOnUse" cx="1120" cy="830" r="210"><stop offset="0" stop-color="#c8846e"/><stop offset="0.8" stop-color="#c5816c"/><stop offset="1" stop-color="#a86a57"/></radialGradient><radialGradient id="tglow"><stop offset="0" stop-color="#fbe0d0" stop-opacity=".95"/><stop offset="1" stop-color="#dd9a84" stop-opacity="0"/></radialGradient><linearGradient id="tshR" gradientUnits="userSpaceOnUse" x1="1150" y1="736.3" x2="1145.3" y2="752.3"><stop offset="0" stop-color="#965f4e" stop-opacity="1"/><stop offset="1" stop-color="#c7836d" stop-opacity="0"/></linearGradient><linearGradient id="tshL" gradientUnits="userSpaceOnUse" x1="936.7" y1="790" x2="947.2" y2="802"><stop offset="0" stop-color="#965f4e" stop-opacity="1"/><stop offset="1" stop-color="#c7836d" stop-opacity="0"/></linearGradient><linearGradient id="twallR" gradientUnits="userSpaceOnUse" x1="1150" y1="712.6" x2="1143" y2="736.3"><stop offset="0" stop-color="#70493c"/><stop offset="1" stop-color="#5c3b30"/></linearGradient><linearGradient id="pg10" x1="0" y1="0" x2="1" y2="0"><stop offset="0" stop-color="#7d4f41"/><stop offset="0.45" stop-color="#b87763"/><stop offset="1" stop-color="#8a5748"/></linearGradient><linearGradient id="pg11" x1="0" y1="0" x2="1" y2="0"><stop offset="0" stop-color="#7d4f41"/><stop offset="0.45" stop-color="#b87763"/><stop offset="1" stop-color="#8a5748"/></linearGradient><linearGradient id="pg12" x1="0" y1="0" x2="1" y2="0"><stop offset="0" stop-color="#7d4f41"/><stop offset="0.45" stop-color="#b87763"/><stop offset="1" stop-color="#8a5748"/></linearGradient><linearGradient id="pg13" x1="0" y1="0" x2="1" y2="0"><stop offset="0" stop-color="#7d4f41"/><stop offset="0.45" stop-color="#b87763"/><stop offset="1" stop-color="#8a5748"/></linearGradient><linearGradient id="pg14" x1="0" y1="0" x2="1" y2="0"><stop offset="0" stop-color="#7d4f41"/><stop offset="0.45" stop-color="#b87763"/><stop offset="1" stop-color="#8a5748"/></linearGradient><linearGradient id="pg15" x1="0" y1="0" x2="1" y2="0"><stop offset="0" stop-color="#7d4f41"/><stop offset="0.45" stop-color="#b87763"/><stop offset="1" stop-color="#8a5748"/></linearGradient><linearGradient id="pg16" x1="0" y1="0" x2="1" y2="0"><stop offset="0" stop-color="#7d4f41"/><stop offset="0.45" stop-color="#b87763"/><stop offset="1" stop-color="#8a5748"/></linearGradient><linearGradient id="pg17" x1="0" y1="0" x2="1" y2="0"><stop offset="0" stop-color="#7d4f41"/><stop offset="0.45" stop-color="#b87763"/><stop offset="1" stop-color="#8a5748"/></linearGradient></defs><g id="tray"><path d="M1039.4 648.4 L1366 744 Q1389 751 1393.3 769 L1393.3 801 Q1393.5 808 1386 815 L1197 978 Q1183 991 1165 990.6 Q1156 990 1149.6 987 L819 892.5 Q800.5 886 800.1 869 L800.1 835 Q800.5 826 808 819 L995.1 659.8 Q1016.2 641.6 1039.4 648.4Z" fill="#bb7964" stroke="#1a0f0b" stroke-width="1.2"/>
<polygon points="817.4,854.3 1149.6,950.9 1149.6,987.0 819.0,892.5" fill="#6f473a" stroke="none" stroke-width="1" stroke-linejoin="round" />
<polygon points="1196.5,943.5 1386.3,770.3 1392.8,776.0 1393.0,801.0 1386.0,815.0 1197.0,978.0" fill="#bb7965" stroke="none" stroke-width="1" stroke-linejoin="round" />
<path d="M1149.6 940 L1196.5 940 L1196.5 978 Q1183 991 1165 990.6 Q1156 990 1149.6 987Z" fill="url(#tcor)"/>
<path d="M800.1 835 L818.9 846 L818.9 892.5 Q800.5 886 800.1 869Z" fill="url(#tlc)"/>
<polygon points="823.9,831.2 1154.0,927.8 1149.6,950.9 817.4,854.3" fill="url(#tfl)" stroke="none" stroke-width="1" stroke-linejoin="round" />
<polygon points="1183.8,925.5 1375.0,751.3 1386.3,770.3 1196.5,943.5" fill="url(#tfr)" stroke="none" stroke-width="1" stroke-linejoin="round" />
<path d="M1154 927.8 Q1170 933 1183.8 925.5 L1196.5 943.5 Q1176 960 1149.6 950.9Z" fill="#c98672"/>
<ellipse cx="1183" cy="936" rx="9" ry="6" fill="url(#tglow)" transform="rotate(-35 1183 936)"/>
<path d="M808 819 Q800.5 826 800.1 835 L818.9 846 L817.4 854.3 L823.9 831.2 Q816 826 818 812Z" fill="#a96b58"/>
<path d="M1375 751.3 L1366 744 Q1389 751 1393.3 769 L1393.3 776 L1386.3 770.3Z" fill="#c98672"/>
<path d="M817.4 854.3 L1149.6 950.9" fill="none" stroke="#1a0f0b" stroke-width="1" stroke-linejoin="round"/>
<path d="M1196.5 943.5 L1386.3 770.3" fill="none" stroke="#1a0f0b" stroke-width="1" stroke-linejoin="round"/>
<path d="M818.9 880.0 L1040.0 948.0 L1149.6 979.7" fill="none" stroke="#1a0f0b" stroke-width="0.9" stroke-linejoin="round"/>
<path d="M1196.5 974.0 L1391.0 799.0" fill="none" stroke="#1a0f0b" stroke-width="0.9" stroke-linejoin="round"/>
<path d="M1149.6 940.8 L1149.6 983.0" fill="none" stroke="#1a0f0b" stroke-width="0.9" stroke-linejoin="round"/>
<path d="M1196.5 943.5 L1196.5 975.4" fill="none" stroke="#1a0f0b" stroke-width="0.9" stroke-linejoin="round"/>
<path d="M818.9 835.0 L818.9 891.0" fill="none" stroke="#1a0f0b" stroke-width="0.9" stroke-linejoin="round"/>
<path d="M1149.6 950.9 Q1172 960 1196.5 943.5 M1149.6 980 Q1172 988 1196.5 974 M800.5 846 Q808 852 818.9 854.3" fill="none" stroke="#1a0f0b" stroke-width=".9"/>
<path d="M1386.3 770.3 Q1391 772 1393.3 777 M1154 927.8 Q1150 935 1149.6 950.9 M1183.8 925.5 Q1194 932 1196.5 943.5" fill="none" stroke="#1a0f0b" stroke-width=".9"/>
<path d="M1008.5 656.8 Q1020.6 646.3 1036.0 650.8 L1361.3 746.1 Q1376.7 750.6 1364.8 761.3 L1186.5 923.1 Q1174.6 933.8 1159.3 929.3 L825.9 831.7 Q810.5 827.2 822.6 816.8 Z" fill="#c7836d" stroke="#1a0f0b" stroke-width="1"/>
<polygon points="1031.8,665.5 1338.7,755.3 1163.8,913.3 850.9,821.8" fill="#c98570" stroke="#1a0f0b" stroke-width="1" stroke-linejoin="round" />
<polygon points="1031.8,665.5 1033.7,670.4 856.7,823.5 850.9,821.8" fill="#a56b59" stroke="#1a0f0b" stroke-width="0.8" stroke-linejoin="round" />
<polygon points="1031.8,665.5 1338.7,755.3 1335.1,758.6 1033.7,670.4" fill="#5a382e" stroke="#1a0f0b" stroke-width="0.8" stroke-linejoin="round" />
<polygon points="1033.7,670.4 1335.1,758.6 1163.8,913.3 856.7,823.5" fill="#cc8973" stroke="#1a0f0b" stroke-width="0.8" stroke-linejoin="round" />
<polygon points="1039.0,680.1 1314.7,760.8 1155.3,904.6 874.8,822.4" fill="url(#tfloor)" stroke="#1a0f0b" stroke-width="1" stroke-linejoin="round" />
<polygon points="1039.0,680.1 874.8,822.4 893.2,827.8 1036.7,703.1" fill="url(#twallL)" stroke="#1a0f0b" stroke-width="1" stroke-linejoin="round" />
<polygon points="1039.0,680.1 1314.7,760.8 1294.9,778.7 1036.7,703.1" fill="url(#twallR)" stroke="#1a0f0b" stroke-width="1" stroke-linejoin="round" />
<polygon points="1036.7,703.1 1294.9,778.7 1294.9,796.7 1036.7,721.1" fill="url(#tshR)" stroke="none" stroke-width="1" stroke-linejoin="round" />
<polygon points="1036.7,703.1 893.2,827.8 911.2,832.8 1054.7,709.1" fill="url(#tshL)" stroke="none" stroke-width="1" stroke-linejoin="round" />
<polygon points="1020.1,696.6 1051.5,705.8 1051.5,730.3 1020.1,721.1" fill="#70473a" stroke="#1a0f0b" stroke-width="1" stroke-linejoin="round" />
<polygon points="1051.5,705.8 1070.4,689.3 1070.4,713.8 1051.5,730.3" fill="#a56855" stroke="#1a0f0b" stroke-width="1" stroke-linejoin="round" />
<polygon points="1039.0,680.1 1070.4,689.3 1051.5,705.8 1020.1,696.6" fill="#cc8973" stroke="#1a0f0b" stroke-width="1" stroke-linejoin="round" />
<polygon points="896.1,804.0 926.5,812.9 905.3,831.4 874.8,822.4" fill="#cc8973" stroke="#1a0f0b" stroke-width="1" stroke-linejoin="round" />
<polygon points="926.5,812.9 927.3,837.5 905.3,831.4" fill="#9a6150" stroke="#1a0f0b" stroke-width="1" stroke-linejoin="round" />
<polygon points="1265.6,768.5 1300.3,778.6 1278.6,795.9 1265.6,792.3" fill="#6a4337" stroke="#1a0f0b" stroke-width="1" stroke-linejoin="round" />
<polygon points="1284.1,751.9 1314.7,760.8 1296.3,777.4 1265.6,768.5" fill="#cc8973" stroke="#1a0f0b" stroke-width="1" stroke-linejoin="round" />
<polygon points="1139.9,876.0 1175.4,886.4 1155.3,904.6 1119.7,894.1" fill="#c98570" stroke="none" stroke-width="1" stroke-linejoin="round" />
<path d="M1119.7 894.1 L1139.9 876.0 L1175.4 886.4" fill="none" stroke="#1a0f0b" stroke-width="0.9" stroke-linejoin="round"/>
<path d="M1104.6 889.7 L1099.7 894.6" fill="none" stroke="#1a0f0b" stroke-width="0.9" stroke-linejoin="round"/>
<path d="M1177.0 885.0 L1190.7 889.0" fill="none" stroke="#1a0f0b" stroke-width="0.9" stroke-linejoin="round"/>
<path d="M999.4 700.1 L1011.8 703.7" fill="none" stroke="#1a0f0b" stroke-width="0.9" stroke-linejoin="round"/>
<path d="M1092.8 687.7 L1085.8 693.8" fill="none" stroke="#1a0f0b" stroke-width="0.9" stroke-linejoin="round"/>
<path d="M1023.5 663.9V691.9A16.2 8.6 0 0 0 1055.9 691.9V663.9Z" fill="url(#pg10)" stroke="#1a0f0b" stroke-width="1"/><ellipse cx="1039.7" cy="663.9" rx="16.2" ry="8.6" fill="#c7836d" stroke="#1a0f0b" stroke-width="1"/>
<path d="M1037.1 676.9V696.7A9.4 4.7 0 0 0 1055.9 696.7V676.9Z" fill="url(#pg11)" stroke="#1a0f0b" stroke-width="1"/><ellipse cx="1046.5" cy="676.9" rx="9.4" ry="4.7" fill="#c7836d" stroke="#1a0f0b" stroke-width="1"/>
<path d="M1290.9 740.4V762.2A16.4 8.5 0 0 0 1323.7 762.2V740.4Z" fill="url(#pg12)" stroke="#1a0f0b" stroke-width="1"/><ellipse cx="1307.3" cy="740.4" rx="16.4" ry="8.5" fill="#c7836d" stroke="#1a0f0b" stroke-width="1"/>
<path d="M1271.3 744.0V765.4A9.2 4.6 0 0 0 1289.7 765.4V744.0Z" fill="url(#pg13)" stroke="#1a0f0b" stroke-width="1"/><ellipse cx="1280.5" cy="744.0" rx="9.2" ry="4.6" fill="#c7836d" stroke="#1a0f0b" stroke-width="1"/>
<path d="M902.4 793.0V814.4A9.5 4.6 0 0 0 921.4 814.4V793.0Z" fill="url(#pg14)" stroke="#1a0f0b" stroke-width="1"/><ellipse cx="911.9" cy="793.0" rx="9.5" ry="4.6" fill="#c7836d" stroke="#1a0f0b" stroke-width="1"/>
<path d="M869.0 796.6V817.9A16.4 8.3 0 0 0 901.8 817.9V796.6Z" fill="url(#pg15)" stroke="#1a0f0b" stroke-width="1"/><ellipse cx="885.4" cy="796.6" rx="16.4" ry="8.3" fill="#c7836d" stroke="#1a0f0b" stroke-width="1"/>
<path d="M1136.9 859.0V875.4A9.3 4.6 0 0 0 1155.5 875.4V859.0Z" fill="url(#pg16)" stroke="#1a0f0b" stroke-width="1"/><ellipse cx="1146.2" cy="859.0" rx="9.3" ry="4.6" fill="#c7836d" stroke="#1a0f0b" stroke-width="1"/>
<path d="M1136.3 874.4V894.9A16.4 8.4 0 0 0 1169.1 894.9V874.4Z" fill="url(#pg17)" stroke="#1a0f0b" stroke-width="1"/><ellipse cx="1152.7" cy="874.4" rx="16.4" ry="8.4" fill="#c7836d" stroke="#1a0f0b" stroke-width="1"/>
<g transform="matrix(1,0.2927,0,1,1078,956.8)"><text x="0" y="0" font-family="Liberation Sans, sans-serif" font-weight="700" font-size="35" fill="#6f473a" stroke="#1a0f0b" stroke-width="1.5" vector-effect="non-scaling-stroke" textLength="69" lengthAdjust="spacingAndGlyphs">4911</text></g>
<g transform="matrix(1,-0.88,0,1,1346.5,839.5)"><text x="0" y="0" font-family="Liberation Sans, sans-serif" font-weight="700" font-size="35" fill="#b5735f" stroke="#1a0f0b" stroke-width="1.5" vector-effect="non-scaling-stroke" textLength="42" lengthAdjust="spacingAndGlyphs">4911</text></g>
</g><g id="green"><polygon points="700.8,578.0 938.4,646.9 938.4,659.2 700.8,590.3" fill="#4f6746" stroke="#10140e" stroke-width="1.25" stroke-linejoin="round" />
<polygon points="645.2,625.8 700.8,578.0 700.8,590.3 645.2,638.1" fill="#88ac78" stroke="#10140e" stroke-width="1.25" stroke-linejoin="round" />
<path d="M626.4 628.2 L695.6 568.7 L957.2 644.6 L888.0 704.1Z M645.2 625.8 L700.8 578.0 L938.4 646.9 L882.8 694.7Z" fill="#93b983" fill-rule="evenodd" stroke="#10140e" stroke-width="1.25" stroke-linejoin="round"/>
<path d="M638.4 289.6 L707.6 230.1 L707.6 584.5 L638.4 644.0Z M645.2 296.0 L700.8 248.2 L700.8 578.0 L645.2 625.8Z" fill="#769b6a" fill-rule="evenodd" stroke="#10140e" stroke-width="1.25" stroke-linejoin="round"/>
<path d="M688.8 232.4 L950.4 308.3 L950.4 662.7 L688.8 586.8Z M700.8 248.2 L938.4 317.1 L938.4 646.9 L700.8 578.0Z" fill="#4f6746" fill-rule="evenodd" stroke="#10140e" stroke-width="1.25" stroke-linejoin="round"/>
<polygon points="700.8,248.2 707.6,242.4 707.6,572.2 700.8,578.0" fill="#769b6a" stroke="#10140e" stroke-width="1.25" stroke-linejoin="round" />
<polygon points="700.8,235.9 938.4,304.8 938.4,317.1 700.8,248.2" fill="#4a6142" stroke="#10140e" stroke-width="1.25" stroke-linejoin="round" />
<polygon points="723.9,274.9 737.6,278.9 737.6,475.9 723.9,471.9" fill="#46593c" stroke="#10140e" stroke-width="1.25" stroke-linejoin="round" />
<polygon points="819.8,302.8 832.6,306.5 832.6,503.5 819.8,499.8" fill="#46593c" stroke="#10140e" stroke-width="1.25" stroke-linejoin="round" />
<polygon points="914.8,330.3 927.5,334.0 927.5,531.0 914.8,527.3" fill="#46593c" stroke="#10140e" stroke-width="1.25" stroke-linejoin="round" />
<path d="M710.5 253.8 L722.4 257.2 L722.4 481.2 Q722.9 487.2 718.4 485.7 L713.5 482.8 Q710.5 481.8 710.5 476.8Z" fill="#536b49" stroke="#10140e" stroke-width="1"/>
<path d="M805.5 281.3 L818.3 285.1 L818.3 509.1 Q818.8 515.1 814.3 513.6 L808.5 510.3 Q805.5 509.3 805.5 504.3Z" fill="#536b49" stroke="#10140e" stroke-width="1"/>
<path d="M900.5 308.9 L913.3 312.6 L913.3 536.6 Q913.8 542.6 909.3 541.1 L903.5 537.9 Q900.5 536.9 900.5 531.9Z" fill="#536b49" stroke="#10140e" stroke-width="1"/>
<path d="M697.1 246.7 L931.0 314.6 L931.0 341.6 L694.8 273.1 Q686.3 260.6 697.1 246.7Z" fill="url(#rg1)" stroke="#10140e" stroke-width="1"/>
<ellipse cx="931.0" cy="328.1" rx="4.0" ry="13.8" transform="rotate(-8 931.0 328.1)" fill="#88ac78" stroke="#10140e" stroke-width="1"/>
<path d="M697.1 458.7 L931.0 526.6 L931.0 553.6 L694.8 485.1 Q686.3 472.6 697.1 458.7Z" fill="url(#rg2)" stroke="#10140e" stroke-width="1"/>
<ellipse cx="931.0" cy="540.1" rx="4.0" ry="13.8" transform="rotate(-8 931.0 540.1)" fill="#88ac78" stroke="#10140e" stroke-width="1"/>
<path d="M710.5 276.8 L722.4 280.2 L722.4 481.2 Q722.9 487.2 718.4 485.7 L713.5 482.8 Q710.5 481.8 710.5 476.8Z" fill="#536b49" stroke="#10140e" stroke-width="1"/>
<path d="M714.5 250.6 L726.4 254.1 Q721.6 265.9 723.4 282.6 L711.5 279.1 Q709.7 262.4 714.5 250.6Z" fill="url(#rg3)" stroke="#10140e" stroke-width="1"/>
<path d="M805.5 304.3 L818.3 308.1 L818.3 509.1 Q818.8 515.1 814.3 513.6 L808.5 510.3 Q805.5 509.3 805.5 504.3Z" fill="#536b49" stroke="#10140e" stroke-width="1"/>
<path d="M809.5 278.1 L822.3 281.9 Q817.5 293.7 819.3 310.4 L806.5 306.7 Q804.7 290.0 809.5 278.1Z" fill="url(#rg4)" stroke="#10140e" stroke-width="1"/>
<path d="M900.5 331.9 L913.3 335.6 L913.3 536.6 Q913.8 542.6 909.3 541.1 L903.5 537.9 Q900.5 536.9 900.5 531.9Z" fill="#536b49" stroke="#10140e" stroke-width="1"/>
<path d="M904.5 305.7 L917.3 309.4 Q912.5 321.2 914.3 337.9 L901.5 334.2 Q899.7 317.5 904.5 305.7Z" fill="url(#rg5)" stroke="#10140e" stroke-width="1"/>
<polygon points="722.4,484.2 732.9,488.7 684.9,621.0 674.4,616.5" fill="#5f7e55" stroke="#10140e" stroke-width="1.25" stroke-linejoin="round" />
<polygon points="710.5,480.8 722.4,484.2 674.4,616.5 662.5,613.1" fill="#7ea371" stroke="#10140e" stroke-width="1.25" stroke-linejoin="round" />
<polygon points="818.3,512.1 828.8,516.6 780.8,648.8 770.3,644.3" fill="#5f7e55" stroke="#10140e" stroke-width="1.25" stroke-linejoin="round" />
<polygon points="805.5,508.3 818.3,512.1 770.3,644.3 757.5,640.6" fill="#7ea371" stroke="#10140e" stroke-width="1.25" stroke-linejoin="round" />
<polygon points="913.3,539.6 923.8,544.1 875.8,676.4 865.3,671.9" fill="#5f7e55" stroke="#10140e" stroke-width="1.25" stroke-linejoin="round" />
<polygon points="900.5,535.9 913.3,539.6 865.3,671.9 852.5,668.2" fill="#7ea371" stroke="#10140e" stroke-width="1.25" stroke-linejoin="round" />
<polygon points="669.9,321.4 683.6,325.4 683.6,501.4 669.9,497.4" fill="#46593c" stroke="#10140e" stroke-width="1.25" stroke-linejoin="round" />
<polygon points="765.8,349.2 778.6,352.9 778.6,528.9 765.8,525.2" fill="#46593c" stroke="#10140e" stroke-width="1.25" stroke-linejoin="round" />
<polygon points="860.8,376.8 873.5,380.4 873.5,556.4 860.8,552.8" fill="#46593c" stroke="#10140e" stroke-width="1.25" stroke-linejoin="round" />
<path d="M656.5 300.2 L668.4 303.7 L668.4 519.2 Q668.9 525.2 664.4 523.7 L659.5 520.7 Q656.5 519.7 656.5 514.7Z" fill="#536b49" stroke="#10140e" stroke-width="1"/>
<path d="M656.5 603.5 L668.4 607.0 L668.4 644.2 Q668.9 650.2 664.4 648.7 L659.5 645.7 Q656.5 644.7 656.5 639.7Z" fill="#536b49" stroke="#10140e" stroke-width="1"/>
<path d="M751.5 327.8 L764.3 331.5 L764.3 547.0 Q764.8 553.0 760.3 551.5 L754.5 548.3 Q751.5 547.3 751.5 542.3Z" fill="#536b49" stroke="#10140e" stroke-width="1"/>
<path d="M751.5 631.1 L764.3 634.8 L764.3 672.0 Q764.8 678.0 760.3 676.5 L754.5 673.3 Q751.5 672.3 751.5 667.3Z" fill="#536b49" stroke="#10140e" stroke-width="1"/>
<path d="M846.5 355.3 L859.3 359.0 L859.3 574.5 Q859.8 580.5 855.3 579.0 L849.5 575.8 Q846.5 574.8 846.5 569.8Z" fill="#536b49" stroke="#10140e" stroke-width="1"/>
<path d="M846.5 658.6 L859.3 662.3 L859.3 699.5 Q859.8 705.5 855.3 704.0 L849.5 700.8 Q846.5 699.8 846.5 694.8Z" fill="#536b49" stroke="#10140e" stroke-width="1"/>
<path d="M645.7 293.9 L877.0 361.0 L877.0 388.0 L643.4 320.3 Q634.9 307.8 645.7 293.9Z" fill="url(#rg6)" stroke="#10140e" stroke-width="1"/>
<path d="M645.7 484.9 L877.0 552.0 L877.0 579.0 L643.4 511.3 Q634.9 498.8 645.7 484.9Z" fill="url(#rg7)" stroke="#10140e" stroke-width="1"/>
<path d="M645.7 604.3 L877.0 671.3 L877.0 698.5 L643.4 630.8 Q634.9 618.2 645.7 604.3Z" fill="url(#rg8)" stroke="#10140e" stroke-width="1"/>
<path d="M656.5 323.2 L668.4 326.7 L668.4 517.7 Q668.9 523.7 664.4 522.2 L659.5 519.2 Q656.5 518.2 656.5 513.2Z" fill="#536b49" stroke="#10140e" stroke-width="1"/>
<path d="M660.5 297.0 L672.4 300.5 Q667.6 312.3 669.4 329.0 L657.5 325.6 Q655.7 308.9 660.5 297.0Z" fill="url(#rg9)" stroke="#10140e" stroke-width="1"/>
<path d="M656.5 515.2L668.4 518.7" stroke="#10140e" stroke-width="1" fill="none"/>
<path d="M660.5 607.3 L672.4 610.8 Q667.6 622.7 669.4 639.5 L657.5 636.1 Q655.7 619.3 660.5 607.3Z" fill="url(#rg10)" stroke="#10140e" stroke-width="1"/>
<path d="M751.5 350.8 L764.3 354.5 L764.3 545.5 Q764.8 551.5 760.3 550.0 L754.5 546.8 Q751.5 545.8 751.5 540.8Z" fill="#536b49" stroke="#10140e" stroke-width="1"/>
<path d="M755.5 324.6 L768.3 328.3 Q763.5 340.1 765.3 356.8 L752.5 353.1 Q750.7 336.4 755.5 324.6Z" fill="url(#rg11)" stroke="#10140e" stroke-width="1"/>
<path d="M751.5 542.8L764.3 546.5" stroke="#10140e" stroke-width="1" fill="none"/>
<path d="M755.5 634.9 L768.3 638.6 Q763.5 650.5 765.3 667.3 L752.5 663.6 Q750.7 646.8 755.5 634.9Z" fill="url(#rg12)" stroke="#10140e" stroke-width="1"/>
<path d="M846.5 378.3 L859.3 382.0 L859.3 573.0 Q859.8 579.0 855.3 577.5 L849.5 574.3 Q846.5 573.3 846.5 568.3Z" fill="#536b49" stroke="#10140e" stroke-width="1"/>
<path d="M850.5 352.1 L863.3 355.9 Q858.5 367.7 860.3 384.4 L847.5 380.7 Q845.7 364.0 850.5 352.1Z" fill="url(#rg13)" stroke="#10140e" stroke-width="1"/>
<path d="M846.5 570.3L859.3 574.0" stroke="#10140e" stroke-width="1" fill="none"/>
<path d="M850.5 662.4 L863.3 666.2 Q858.5 678.1 860.3 694.9 L847.5 691.2 Q845.7 674.4 850.5 662.4Z" fill="url(#rg14)" stroke="#10140e" stroke-width="1"/>
<path d="M626.4 286.1 L695.6 226.6 L957.2 302.5 L888.0 362.0Z M645.2 283.7 L700.8 235.9 L938.4 304.8 L882.8 352.6Z" fill="#93b983" fill-rule="evenodd" stroke="#10140e" stroke-width="1.25" stroke-linejoin="round"/>
<path d="M888.0 362.0 L957.2 302.5 L957.2 656.9 L888.0 716.4Z M894.8 368.4 L950.4 320.6 L950.4 650.4 L894.8 698.2Z" fill="#88ac78" fill-rule="evenodd" stroke="#10140e" stroke-width="1.25" stroke-linejoin="round"/>
<path d="M626.4 286.1 L888.0 362.0 L888.0 716.4 L626.4 640.5Z M638.4 301.9 L876.0 370.8 L876.0 700.6 L638.4 631.7Z" fill="#536b49" fill-rule="evenodd" stroke="#10140e" stroke-width="1.25" stroke-linejoin="round"/>
</g><g id="tri"><ellipse cx="791.4" cy="293.7" rx="16.400" ry="8.200" fill="none" stroke="#f1f1f1" stroke-width="3.800"/><path d="M792.9 293.2L799.9 286.5A18 9.400 0 0 1 804.9 299.2Z" fill="#ececec" stroke="#2a4f8f" stroke-width=".8"/><ellipse cx="791.4" cy="293.7" rx="18.300" ry="9.600" fill="none" stroke="#2a4f8f" stroke-width=".9"/><ellipse cx="791.4" cy="293.7" rx="14.300" ry="6.700" fill="none" stroke="#2a4f8f" stroke-width=".9"/><rect x="789.9" y="273.7" width="3.100" height="17.500" fill="#1010e0"/><path d="M801.8 284.5L808.1999999999999 279.59999999999997" stroke="#12a816" stroke-width="2.300"/><path d="M809.9 298.59999999999997L820.0 302.09999999999997" stroke="#e01212" stroke-width="2.300"/>
<ellipse cx="791.4" cy="649.4" rx="16.400" ry="8.200" fill="none" stroke="#f1f1f1" stroke-width="3.800"/><path d="M792.9 648.9L799.9 642.1999999999999A18 9.400 0 0 1 804.9 654.9Z" fill="#ececec" stroke="#2a4f8f" stroke-width=".8"/><ellipse cx="791.4" cy="649.4" rx="18.300" ry="9.600" fill="none" stroke="#2a4f8f" stroke-width=".9"/><ellipse cx="791.4" cy="649.4" rx="14.300" ry="6.700" fill="none" stroke="#2a4f8f" stroke-width=".9"/><rect x="789.9" y="629.4" width="3.100" height="17.500" fill="#1010e0"/><path d="M801.8 640.1999999999999L808.1999999999999 635.3" stroke="#12a816" stroke-width="2.300"/><path d="M809.9 654.3L820.0 657.8" stroke="#e01212" stroke-width="2.300"/>
<ellipse cx="1096.3" cy="848.2" rx="16.400" ry="8.200" fill="none" stroke="#f1f1f1" stroke-width="3.800"/><path d="M1097.8 847.7L1104.8 841.0A18 9.400 0 0 1 1109.8 853.7Z" fill="#ececec" stroke="#2a4f8f" stroke-width=".8"/><ellipse cx="1096.3" cy="848.2" rx="18.300" ry="9.600" fill="none" stroke="#2a4f8f" stroke-width=".9"/><ellipse cx="1096.3" cy="848.2" rx="14.300" ry="6.700" fill="none" stroke="#2a4f8f" stroke-width=".9"/><rect x="1094.8" y="828.2" width="3.100" height="17.500" fill="#1010e0"/><path d="M1106.7 839.0L1113.1 834.1" stroke="#12a816" stroke-width="2.300"/><path d="M1114.8 853.1L1124.8999999999999 856.6" stroke="#e01212" stroke-width="2.300"/><circle cx="1096.3" cy="848.2" r="3.700" fill="#fff" stroke="#0a0a0a" stroke-width="1.900"/><circle cx="1096.3" cy="848.2" r="1.300" fill="#0a0a0a"/>
</g></svg>
<!--MODEL-END-->
</body>
</html>
